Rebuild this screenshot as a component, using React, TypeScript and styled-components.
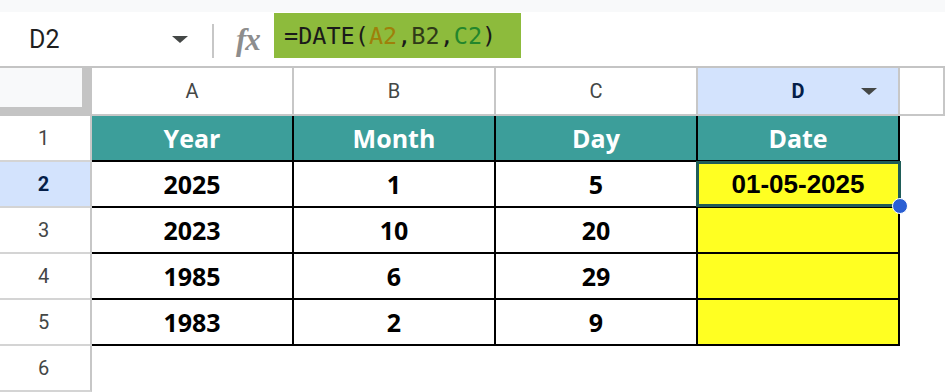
import React from 'react'
import styled, { createGlobalStyle } from 'styled-components'

const GlobalStyle = createGlobalStyle`
  html, body {
    margin: 0;
    padding: 0;
    background: #ffffff;
    overflow: hidden;
  }
  body {
    font-family: Roboto, 'Liberation Sans', sans-serif;
  }
`

type CellKind = 'head' | 'body' | 'date' | 'blank'

interface SheetRow {
  num: number
  kind: 'head' | 'body' | 'blank'
  cells: string[]
  date?: string
}

const columns = ['A', 'B', 'C', 'D']

const rows: SheetRow[] = [
  { num: 1, kind: 'head', cells: ['Year', 'Month', 'Day', 'Date'] },
  { num: 2, kind: 'body', cells: ['2025', '1', '5'], date: '01-05-2025' },
  { num: 3, kind: 'body', cells: ['2023', '10', '20'], date: '' },
  { num: 4, kind: 'body', cells: ['1985', '6', '29'], date: '' },
  { num: 5, kind: 'body', cells: ['1983', '2', '9'], date: '' },
  { num: 6, kind: 'blank', cells: ['', '', '', ''] },
]

const App = () => (
  <>
    <GlobalStyle />
    <Page>
      <TopStrip />
      <FormulaBar>
        <NameBox>
          <CellRef>D2</CellRef>
          <Caret />
        </NameBox>
        <Divider />
        <FxIcon>fx</FxIcon>
        <FormulaInput>
          =DATE(<Ref $color='#9e800a'>A2</Ref>,<Ref $color='#2f3a18'>B2</Ref>,
          <Ref $color='#23862c'>C2</Ref>)
        </FormulaInput>
      </FormulaBar>
      <Sheet>
        <Corner />
        {columns.map((col) => (
          <ColHeader key={col} $selected={col === 'D'}>
            <span />
            <ColLabel $selected={col === 'D'}>{col}</ColLabel>
            {col === 'D' ? <HeaderCaret /> : <span />}
          </ColHeader>
        ))}
        <ColHeader />
        {rows.map((row) => (
          <React.Fragment key={row.num}>
            <RowHeader $selected={row.num === 2}>{row.num}</RowHeader>
            {columns.map((col, i) => {
              let kind: CellKind = row.kind
              let text = row.cells[i]
              if (row.kind === 'body' && col === 'D') {
                kind = 'date'
                text = row.date ?? ''
              }
              return (
                <Cell key={col} $kind={kind}>
                  {text}
                  {row.num === 2 && col === 'D' && (
                    <Selection>
                      <FillHandle />
                    </Selection>
                  )}
                </Cell>
              )
            })}
            <Cell $kind='blank' />
          </React.Fragment>
        ))}
      </Sheet>
    </Page>
  </>
)

const Page = styled.div`
  width: 945px;
  height: 392px;
  overflow: hidden;
  background: #ffffff;
`

const TopStrip = styled.div`
  height: 12px;
  background: #f8f9fa;
`

const FormulaBar = styled.div`
  height: 54px;
  display: flex;
  align-items: center;
  padding-bottom: 1px;
  box-sizing: border-box;
`

const NameBox = styled.div`
  width: 212px;
  display: flex;
  align-items: center;
  justify-content: space-between;
  padding: 2px 24px 0 29px;
  box-sizing: border-box;
`

const CellRef = styled.span`
  font-family: Roboto, sans-serif;
  font-size: 25px;
  color: #1f1f1f;
`

const Caret = styled.span`
  width: 0;
  height: 0;
  border-left: 8px solid transparent;
  border-right: 8px solid transparent;
  border-top: 7px solid #444746;
`

const Divider = styled.div`
  width: 2px;
  height: 34px;
  margin-top: 5px;
  background: #c7c7c7;
`

const FxIcon = styled.span`
  width: 28px;
  margin: 3px 10px 0 22px;
  font-family: 'Liberation Serif', serif;
  font-style: italic;
  font-weight: 700;
  font-size: 31px;
  color: #8d8d8d;
  letter-spacing: -1px;
`

const FormulaInput = styled.div`
  align-self: flex-start;
  margin-top: 1px;
  height: 45px;
  width: 247px;
  box-sizing: border-box;
  padding: 0 0 0 10px;
  display: flex;
  align-items: center;
  background: #8dbb3c;
  font-family: 'DejaVu Sans Mono', 'Liberation Mono', monospace;
  font-size: 23.5px;
  color: #1a1a1a;
  white-space: pre;
`

const Ref = styled.span<{ $color: string }>`
  color: ${({ $color }) => $color};
`

const Sheet = styled.div`
  display: grid;
  grid-template-columns: 92px repeat(4, 202px) 1fr;
  grid-template-rows: 48px repeat(6, 46px);
  border-top: 2px solid #c4c4c4;
`

const Corner = styled.div`
  background: #f8f9fa;
  border-right: 10px solid #c4c4c4;
  border-bottom: 9px solid #c4c4c4;
`

const ColHeader = styled.div<{ $selected?: boolean }>`
  display: grid;
  grid-template-columns: 1fr auto 1fr;
  align-items: center;
  background: ${({ $selected }) => ($selected ? '#d3e3fd' : '#ffffff')};
  border-right: 2px solid #c7c7c7;
  border-bottom: 2px solid #c7c7c7;
  &:last-child {
    border-right: none;
  }
`

const ColLabel = styled.span<{ $selected?: boolean }>`
  font-family: Roboto, sans-serif;
  font-size: 20px;
  font-weight: ${({ $selected }) => ($selected ? 700 : 400)};
  color: ${({ $selected }) => ($selected ? '#041e49' : '#444746')};
`

const HeaderCaret = styled.span`
  justify-self: end;
  margin-right: 21px;
  width: 0;
  height: 0;
  border-left: 8px solid transparent;
  border-right: 8px solid transparent;
  border-top: 7px solid #444746;
`

const RowHeader = styled.div<{ $selected?: boolean }>`
  display: flex;
  align-items: center;
  justify-content: center;
  padding-right: 3px;
  font-family: Roboto, sans-serif;
  font-size: 20px;
  font-weight: ${({ $selected }) => ($selected ? 700 : 400)};
  color: ${({ $selected }) => ($selected ? '#041e49' : '#444746')};
  background: ${({ $selected }) => ($selected ? '#d3e3fd' : '#ffffff')};
  border-right: 2px solid #c7c7c7;
  border-bottom: 2px solid #d4d4d4;
`

const cellBg: Record<CellKind, string> = {
  head: '#3c9e9a',
  body: '#ffffff',
  date: '#ffff22',
  blank: 'transparent',
}

const Cell = styled.div<{ $kind: CellKind }>`
  position: relative;
  display: flex;
  align-items: center;
  justify-content: center;
  background: ${({ $kind }) => cellBg[$kind]};
  border-right: ${({ $kind }) => ($kind === 'blank' ? 'none' : '2px solid #000')};
  border-bottom: ${({ $kind }) => ($kind === 'blank' ? 'none' : '2px solid #000')};
  font-family: ${({ $kind }) =>
    $kind === 'date' ? "'Liberation Sans', Arial, sans-serif" : "'Open Sans', sans-serif"};
  font-size: ${({ $kind }) => ($kind === 'date' ? '26px' : '25px')};
  font-weight: 700;
  color: ${({ $kind }) => ($kind === 'head' ? '#ffffff' : '#000000')};
`

const Selection = styled.div`
  position: absolute;
  z-index: 2;
  top: -1px;
  left: -2px;
  right: -3px;
  bottom: -1px;
  border: 3px solid #1f5d58;
  pointer-events: none;
`

const FillHandle = styled.span`
  position: absolute;
  right: -10px;
  bottom: -10px;
  width: 14px;
  height: 14px;
  border-radius: 50%;
  background: #2a5fd3;
  border: 1px solid #ffffff;
`

export default App
